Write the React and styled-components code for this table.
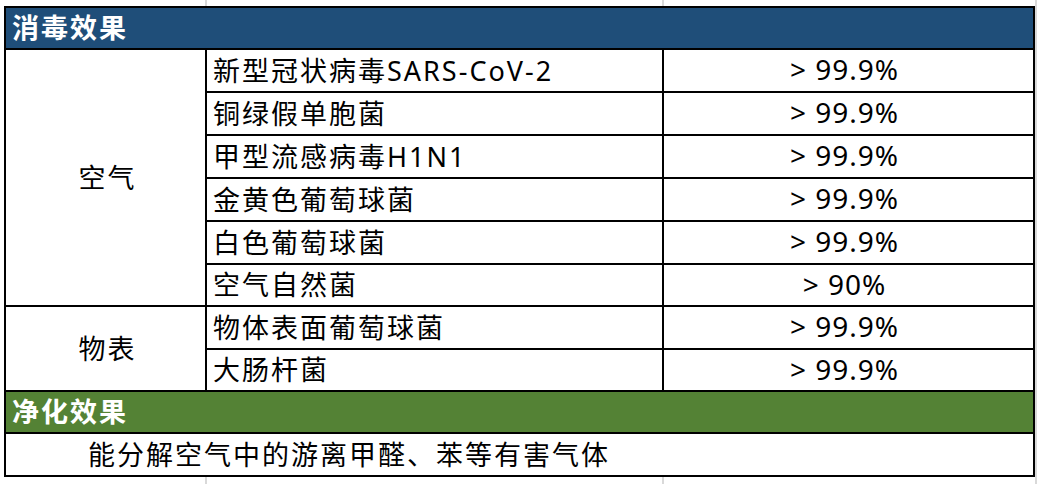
import React from 'react';
import styled, { createGlobalStyle } from 'styled-components';

const GlobalStyle = createGlobalStyle`
  html, body {
    margin: 0;
    padding: 0;
    background: #ffffff;
  }
  body {
    font-family: "Noto Sans", "Noto Sans CJK SC", sans-serif;
    color: #000;
  }
`;

const sections = [
  {
    category: '空气',
    items: [
      { name: '新型冠状病毒SARS-CoV-2', value: '> 99.9%' },
      { name: '铜绿假单胞菌', value: '> 99.9%' },
      { name: '甲型流感病毒H1N1', value: '> 99.9%' },
      { name: '金黄色葡萄球菌', value: '> 99.9%' },
      { name: '白色葡萄球菌', value: '> 99.9%' },
      { name: '空气自然菌', value: '> 90%' },
    ],
  },
  {
    category: '物表',
    items: [
      { name: '物体表面葡萄球菌', value: '> 99.9%' },
      { name: '大肠杆菌', value: '> 99.9%' },
    ],
  },
];

const App = () => {
  return (
    <Sheet>
      <GlobalStyle />
      <Table>
        <TitleRow $bg="#1f4e79">消毒效果</TitleRow>
        {sections.map((section) => (
          <React.Fragment key={section.category}>
            <CategoryCell $span={section.items.length}>{section.category}</CategoryCell>
            {section.items.map((item) => (
              <React.Fragment key={item.name}>
                <NameCell>{item.name}</NameCell>
                <ValueCell>{item.value}</ValueCell>
              </React.Fragment>
            ))}
          </React.Fragment>
        ))}
        <TitleRow $bg="#548235">净化效果</TitleRow>
        <NoteRow>能分解空气中的游离甲醛、苯等有害气体</NoteRow>
      </Table>
    </Sheet>
  );
};

// spreadsheet background with faint gridlines
const Sheet = styled.div`
  width: 1040px;
  height: 484px;
  box-sizing: border-box;
  padding: 6px 0 0 4px;
  overflow: hidden;
  background-image:
    linear-gradient(#d9d9d9, #d9d9d9),
    linear-gradient(#d9d9d9, #d9d9d9),
    linear-gradient(#d9d9d9, #d9d9d9);
  background-size: 2px 100%, 2px 100%, 2px 100%;
  background-position: 205px 0, 662px 0, 1035px 0;
  background-repeat: no-repeat;
`;

const Table = styled.div`
  display: grid;
  width: 1031px;
  box-sizing: border-box;
  grid-template-columns: 199px 455px 369px;
  grid-template-rows: 40px 41px 41px 41px 41px 41px 40px 41px 40px 40px 41px;
  gap: 2px;
  padding: 2px;
  background: #000;
`;

const Cell = styled.div`
  display: flex;
  align-items: center;
  background: #fff;
  font-size: 27px;
  letter-spacing: 2px;
  white-space: nowrap;
  overflow: hidden;
  padding-bottom: 3px;
`;

const TitleRow = styled(Cell)`
  grid-column: 1 / -1;
  background: ${(p) => p.$bg};
  color: #fff;
  font-weight: 700;
  padding-left: 6px;
`;

const CategoryCell = styled(Cell)`
  grid-row: span ${(p) => p.$span};
  justify-content: center;
  padding-left: 4px;
`;

const NameCell = styled(Cell)`
  padding-left: 6px;
`;

const ValueCell = styled(Cell)`
  justify-content: center;
  font-size: 28px;
  letter-spacing: 1px;
  padding-right: 8px;
`;

const NoteRow = styled(Cell)`
  grid-column: 1 / -1;
  padding-left: 82px;
`;

export default App;
